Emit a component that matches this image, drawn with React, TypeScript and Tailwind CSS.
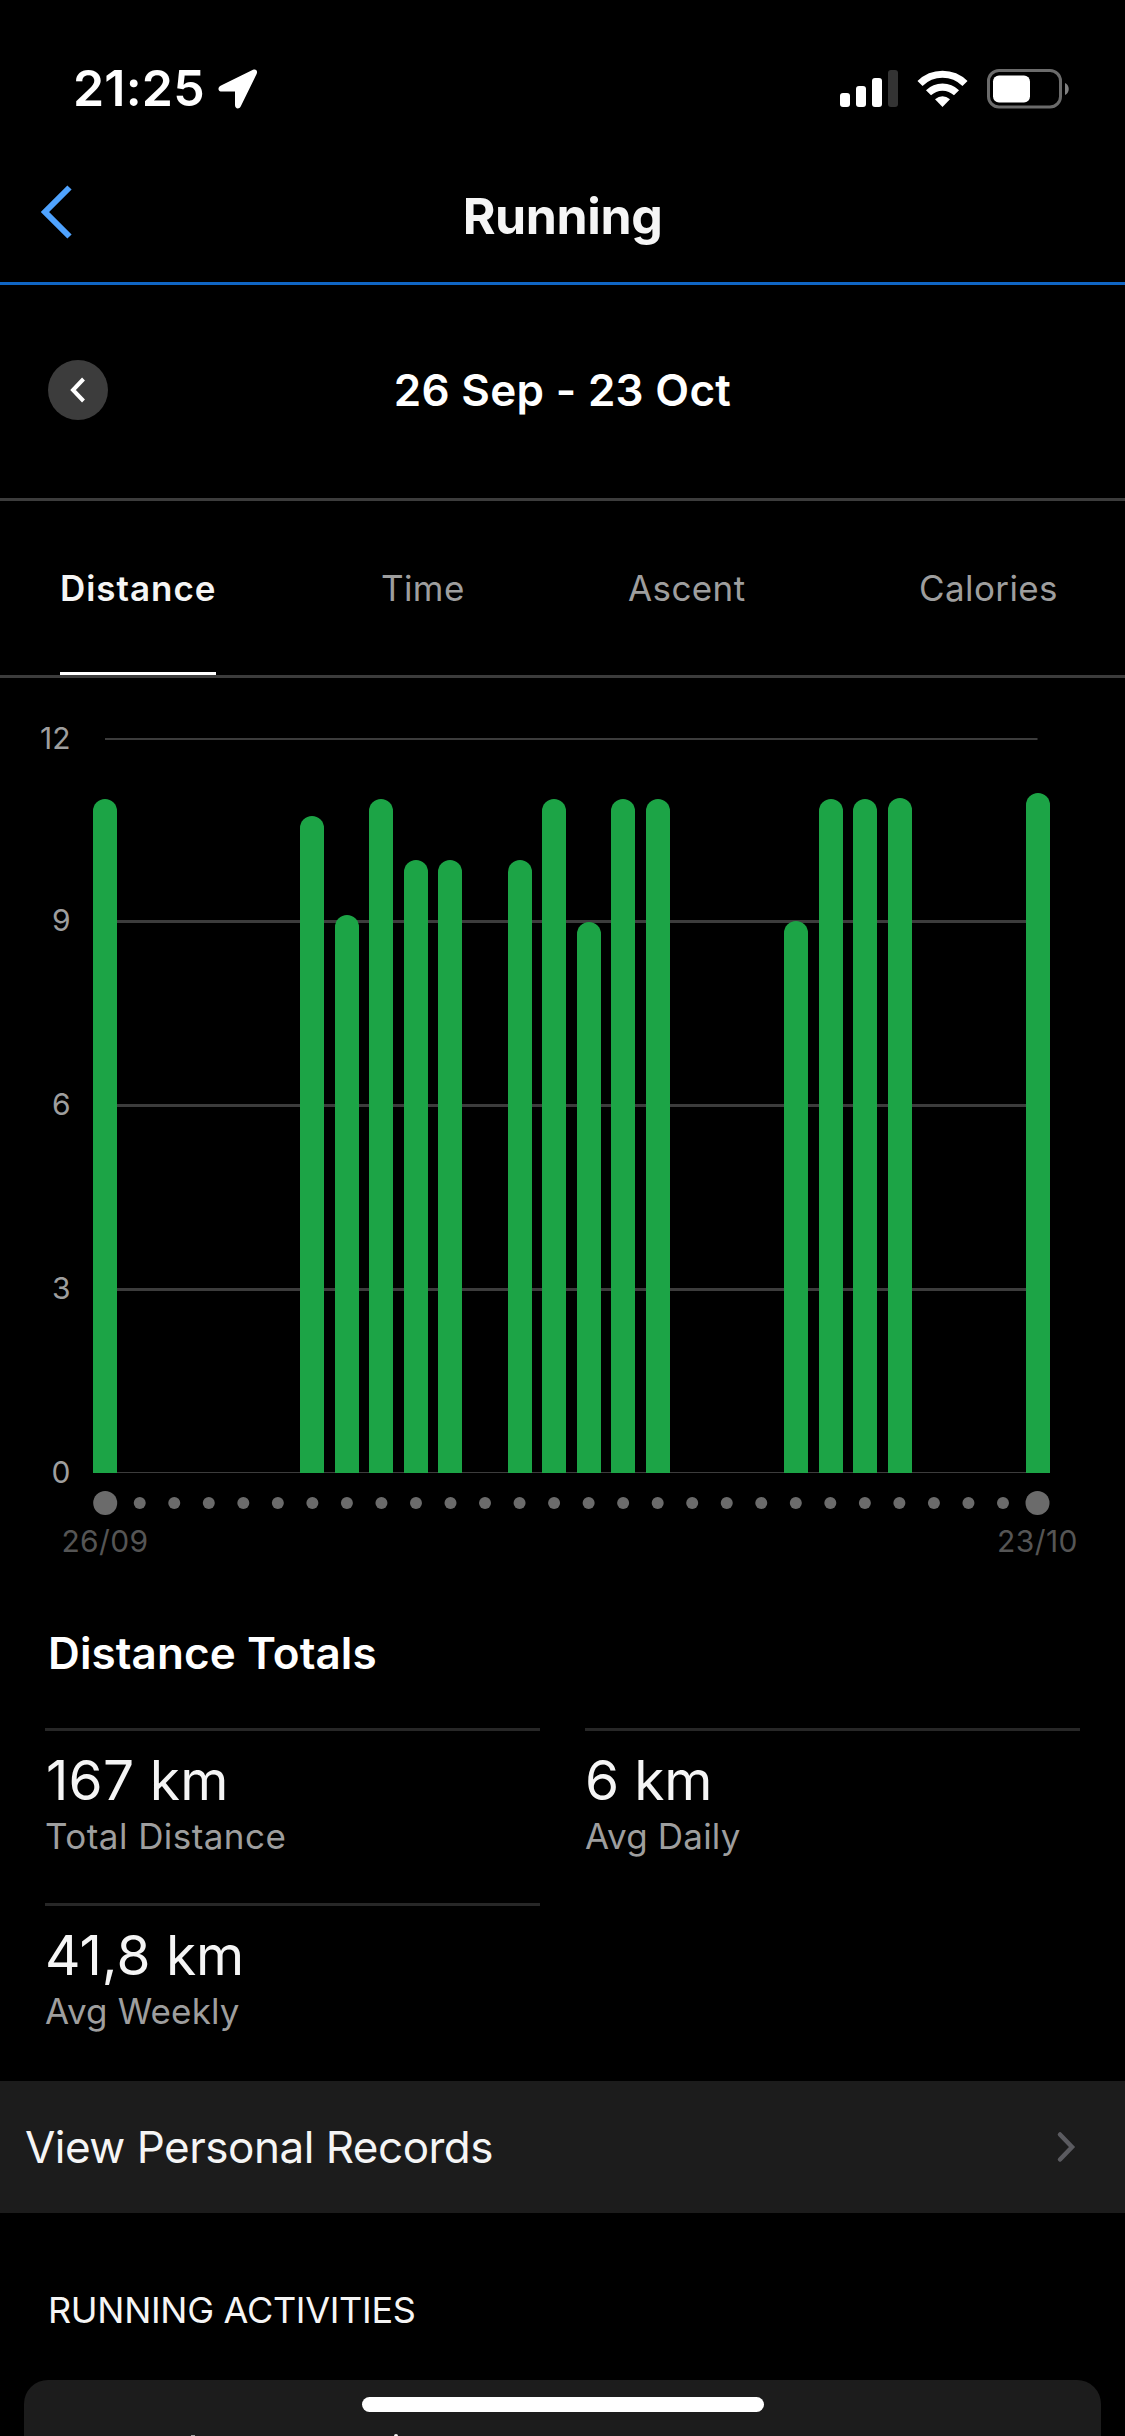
import { useState } from 'react';

const tabs = [
  { name: 'Distance', width: 'w-[321px]', spacing: 'tracking-[0.95px]' },
  { name: 'Time', width: 'w-[247px]', spacing: 'tracking-[0.4px]' },
  { name: 'Ascent', width: 'w-[291px]', spacing: 'tracking-[0.4px]' },
  { name: 'Calories', width: 'w-[147px]', spacing: 'tracking-[0.4px]' },
];

// km per day, 26/09 - 23/10
const days = [
  11.01, 0, 0, 0, 0, 0, 10.73, 9.12, 11.01, 10.01, 10.01, 0, 10.01, 11.01, 9, 11.01, 11.01, 0, 0, 0, 9.02, 11.01, 11.01,
  11.03, 0, 0, 0, 11.11,
];

const gridLines = [
  { label: '12', y: 60, h: 2 },
  { label: '9', y: 242, h: 3 },
  { label: '6', y: 426, h: 3 },
  { label: '3', y: 610, h: 3 },
  { label: '0', y: 794, h: 1 },
];

const stats = [
  { value: '167 km', label: 'Total Distance', valueStyle: 'pl-px tracking-[0.2px]', spacing: 'tracking-[0.45px]' },
  { value: '6 km', label: 'Avg Daily', valueStyle: 'tracking-[-0.2px]', spacing: 'tracking-[0.2px]' },
  { value: '41,8 km', label: 'Avg Weekly', valueStyle: 'tracking-normal', spacing: 'tracking-[0.15px]' },
];

const StatusBar = () => (
  <div className="flex h-[177px] items-center pl-[73px] pr-[55px]">
    <div className="w-[145px] whitespace-nowrap text-[50px] font-semibold tracking-[0.2px] text-white">21:25</div>
    <svg width="40" height="40" viewBox="0 0 40 40" fill="#fff">
      <path d="M35 .8 3 16.6C-1 18.7 0 22.6 4 22.6H17V36c0 4 4.200 4.600 5.800 1.200L38.600 5C40 2 38 -.6 35 .8Z" />
    </svg>
    <div className="ml-auto flex items-center">
      <svg width="58" height="38" viewBox="0 0 58 38" fill="#fff">
        <rect x="0" y="23" width="10" height="14" rx="3" />
        <rect x="16" y="16" width="10" height="21" rx="3" />
        <rect x="32" y="8" width="10" height="29" rx="3" />
        <rect x="48" y="0" width="10" height="37" rx="3" fill="#333" />
      </svg>
      <svg className="ml-[19px]" width="51" height="38" viewBox="0 0 51 38" fill="none" stroke="#fff" strokeWidth="7.200">
        <path d="M3 13.500a32 32 0 0 1 45 0" />
        <path d="M11.500 22.800a20 20 0 0 1 28 0" />
        <path d="M25.500 37 18 29.200q7.500-6 15 0Z" fill="#fff" stroke="none" />
      </svg>
      <svg className="ml-[19px]" width="83" height="40" viewBox="0 0 83 40">
        <rect x="1.500" y="1.500" width="72" height="36.500" rx="10.500" fill="none" stroke="#6b6b6b" strokeWidth="3" />
        <rect x="6" y="6.500" width="37" height="27" rx="6" fill="#fff" />
        <path d="M78 14c5 2 5 10 0 12Z" fill="#808080" />
      </svg>
    </div>
  </div>
);

const Chart = () => (
  <svg className="block" width="1125" height="922" viewBox="0 0 1125 922" fontSize="30">
    {gridLines.map((line) => (
      <g key={line.label}>
        <rect x="105" y={line.y} width="932.500" height={line.h} fill="#3c3c3c" />
        <text x="70.500" y={line.y + 10.500} textAnchor="end" fill="#9e9e9e">
          {line.label}
        </text>
      </g>
    ))}
    {days.map((km, i) => {
      const x = Math.round(92.8 + i * 34.56);
      const top = Math.round(795 - km * 61.2);
      if (!km) return null;
      return <path key={i} d={`M${x} 795V${top + 12}a12 12 0 0 1 24 0V795Z`} fill="#1ca446" />;
    })}
    {days.map((_, i) => (
      <circle key={i} cx={105.2 + i * 34.53} cy="825" r={i === 0 || i === days.length - 1 ? 12 : 6} fill="#6b6b6b" />
    ))}
    <text x="105" y="874" textAnchor="middle" letterSpacing="0.400" fill="#555">
      26/09
    </text>
    <text x="1037.500" y="874" textAnchor="middle" letterSpacing="0.400" fill="#555">
      23/10
    </text>
  </svg>
);

const App = () => {
  const [active, setActive] = useState('Distance');

  return (
    <div className="h-[2436px] w-[1125px] overflow-hidden bg-black font-['Inter',sans-serif] text-[#f5f5f5]">
      <StatusBar />
      <div className="relative flex h-[108px] items-center justify-center border-b-[3px] border-[#1066c4] pb-[27px]">
        <button className="absolute left-[40px] top-[8px]">
          <svg width="34" height="54" viewBox="0 0 34 54" fill="none" stroke="#4fa3ff" strokeWidth="6">
            <path d="M29.500 2.500 5 27l24.500 24.500" />
          </svg>
        </button>
        <h1 className="text-[50px] font-bold leading-[60px] tracking-[-0.4px]">Running</h1>
      </div>

      <div className="relative flex h-[216px] items-center justify-center border-b-[3px] border-[#3c3c3c] pb-[3px]">
        <button className="absolute left-[48px] top-[75px] flex h-[60px] w-[60px] items-center justify-center rounded-full bg-[#3c3c3c]">
          <svg width="16" height="26" viewBox="0 0 16 26" fill="none" stroke="#fff" strokeWidth="4">
            <path d="M13.500 2 3 13l10.500 11" />
          </svg>
        </button>
        <div className="text-[44px] font-semibold tracking-[0.3px] text-white">26 Sep - 23 Oct</div>
      </div>

      <div className="flex h-[177px] border-b-[3px] border-[#3c3c3c] pl-[60px]">
        {tabs.map((tab) => (
          <div key={tab.name} className={`flex ${tab.width}`}>
            <button
              className={`border-b-[3px] pt-[3px] text-[35px] ${tab.spacing} ${
                active === tab.name ? 'border-white font-semibold' : 'border-transparent text-[#9e9e9e]'
              }`}
              onClick={() => {
                setActive(tab.name);
              }}
            >
              {tab.name}
            </button>
          </div>
        ))}
      </div>

      <Chart />

      <h2 className="h-[128px] pl-[48px] text-[44px] font-semibold leading-[106px] tracking-[0.1px] text-white">
        Distance Totals
      </h2>
      <div className="grid grid-cols-2 gap-x-[45px] px-[45px]">
        {stats.map((stat) => (
          <div key={stat.label} className="h-[175px] border-t-[3px] border-[#272727] pt-[19px]">
            <div className={`text-[55px] leading-[60px] ${stat.valueStyle}`}>{stat.value}</div>
            <div className={`text-[35px] leading-[53px] text-[#9e9e9e] ${stat.spacing}`}>{stat.label}</div>
          </div>
        ))}
      </div>

      <div className="mt-[3px] flex h-[132px] items-center justify-between bg-[#1c1c1c] pl-[25px] pr-[49px]">
        <span className="text-[44px] tracking-[-0.5px]">View Personal Records</span>
        <svg width="20" height="32" viewBox="0 0 20 32" fill="none" stroke="#5b5b60" strokeWidth="4.500" strokeLinecap="round">
          <path d="m4 3.500 12 12.500L4 28.500" />
        </svg>
      </div>

      <h3 className="h-[167px] pl-[48px] pt-[70px] text-[36px] leading-[54px] tracking-[-0.3px]">RUNNING ACTIVITIES</h3>
      <div className="mx-[24px] h-[56px] overflow-hidden rounded-t-[24px] bg-[#1c1c1c] pt-[17px]">
        <div className="mx-auto h-[15px] w-[402px] rounded-full bg-white" />
        <div className="mt-[22px] flex pl-[167px]">
          <span className="mt-px h-[2px] w-[4px] bg-[#9e9e9e]" />
          <span className="ml-[199px] h-[3px] w-[4px] rounded-t-sm bg-[#f5f5f5]" />
        </div>
      </div>
    </div>
  );
};

export default App;
